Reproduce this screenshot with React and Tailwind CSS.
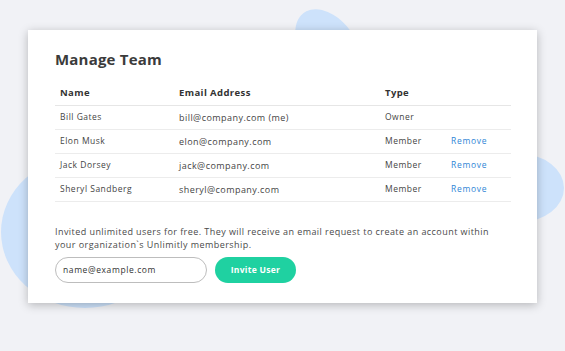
import React from "react";

const members = [
  { name: "Bill Gates", email: "bill@company.com (me)", type: "Owner", removable: false },
  { name: "Elon Musk", email: "elon@company.com", type: "Member", removable: true },
  { name: "Jack Dorsey", email: "jack@company.com", type: "Member", removable: true },
  { name: "Sheryl Sandberg", email: "sheryl@company.com", type: "Member", removable: true },
];

const App = () => {
  return (
    <div
      className="relative w-[565px] h-[351px] overflow-hidden bg-[#f1f2f6]"
      style={{ fontFamily: '"Open Sans", "Liberation Sans", sans-serif' }}
    >
      {/* background blobs */}
      <svg className="absolute left-0 top-0" width="565" height="351" viewBox="0 0 565 351">
        <path d="M296 40 C292 18 305 6 322 10 C338 14 350 28 356 40 Z" fill="#cde2fb" />
        <ellipse cx="85" cy="232" rx="84" ry="76" fill="#cde2fb" />
        <ellipse cx="520" cy="188" rx="44" ry="34" fill="#cde2fb" />
      </svg>

      {/* Card */}
      <div className="absolute left-[28px] top-[30px] w-[509px] h-[273px] bg-white shadow-[0_2px_9px_rgba(0,0,0,0.25)] pl-[27px] pr-[26px] pt-[18px]">
        <h1 className="text-[15px] font-bold text-[#3b3b3b] leading-[22px] tracking-[0.2px]">Manage Team</h1>

        <div className="mt-[10px]">
          <div className="flex items-center h-[26px] pt-[2px] border-b border-[#e6e6e6] text-[9.5px] font-bold text-[#333] tracking-[0.4px]">
            <div className="w-[124px] pl-[5px]">Name</div>
            <div className="w-[206px]">Email Address</div>
            <div className="w-[66px]">Type</div>
          </div>
          {members.map((m) => (
            <div
              key={m.name}
              className="flex items-center h-[24px] border-b border-[#ececec] text-[8.5px] text-[#444] tracking-[0.5px]"
            >
              <div className="w-[124px] pl-[5px]">{m.name}</div>
              <div className="w-[206px] text-[9px] tracking-[0.45px]">{m.email}</div>
              <div className="w-[66px]">{m.type}</div>
              {m.removable && <div className="text-[#2f86d6] tracking-[0.7px]">Remove</div>}
            </div>
          ))}
        </div>

        <p className="mt-[23px] text-[9px] leading-[13px] text-[#4a4a4a] tracking-[0.44px] w-[452px]">
          Invited unlimited users for free. They will receive an email request to create an account within
          your organization`s Unlimitly membership.
        </p>

        <div className="flex items-center mt-[6px] gap-[8px]">
          <div className="w-[152px] h-[26px] rounded-full border border-[#bdbdbd] flex items-center pl-[7px] text-[8.5px] text-[#333] tracking-[0.6px]">
            name@example.com
          </div>
          <button className="w-[81px] h-[26px] rounded-full bg-[#1fd1a1] text-white text-[8.5px] font-bold tracking-[0.3px]">
            Invite User
          </button>
        </div>
      </div>
    </div>
  );
};

export default App;
